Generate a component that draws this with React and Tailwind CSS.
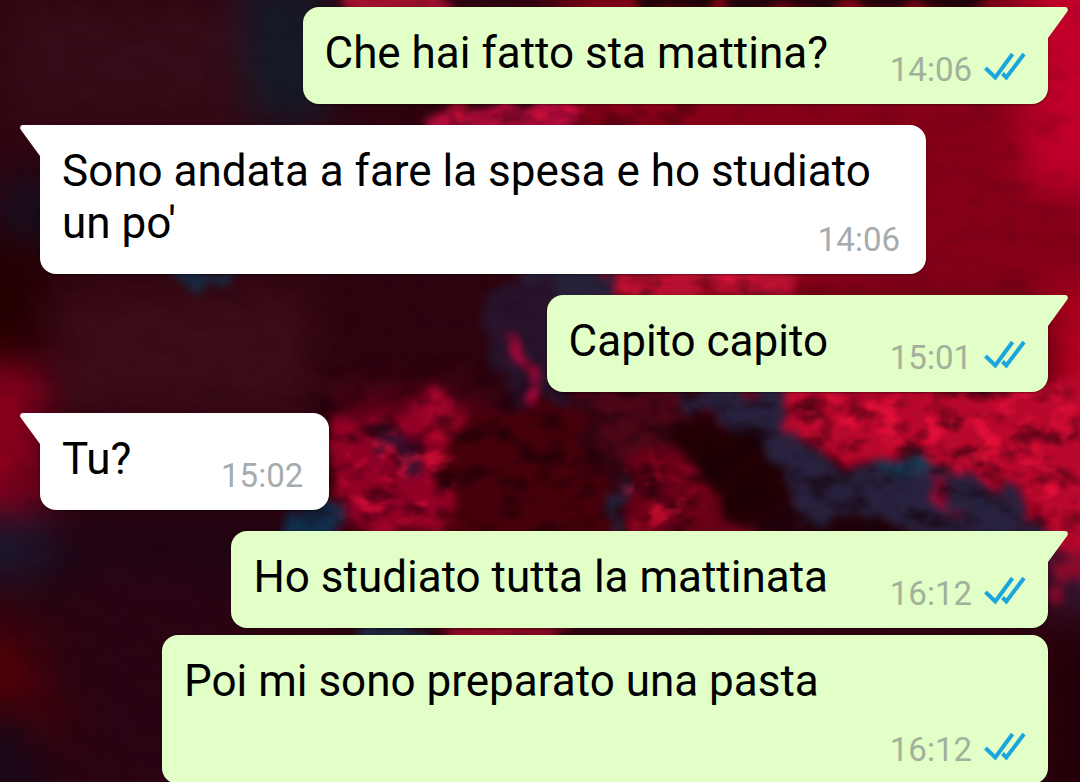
import React from "react";

const messages = [
  { id: 1, mine: true, tail: true, text: "Che hai fatto sta mattina?", time: "14:06" },
  { id: 2, mine: false, tail: true, text: "Sono andata a fare la spesa e ho studiato un po'", time: "14:06" },
  { id: 3, mine: true, tail: true, text: "Capito capito", time: "15:01" },
  { id: 4, mine: false, tail: true, text: "Tu?", time: "15:02" },
  { id: 5, mine: true, tail: true, text: "Ho studiato tutta la mattinata", time: "16:12" },
  { id: 6, mine: true, tail: false, text: "Poi mi sono preparato una pasta", time: "16:12", wide: true },
];

function ReadTicks() {
  return (
    <svg className="mb-1 h-[30px] w-[42px]" viewBox="0 0 42 30" fill="none" stroke="#1ba5dd" strokeWidth="4" role="img" aria-label="Letto">
      <path d="M1.5 15 L11.3 24.5 L28.5 1" />
      <path d="M18.5 20.5 L22.3 24.5 L40 1" />
    </svg>
  );
}

function Tail({ mine }) {
  return (
    <svg
      className={mine ? "absolute top-0 -right-[20px] h-8 w-[21px]" : "absolute top-0 -left-[20px] h-8 w-[21px] -scale-x-100"}
      viewBox="0 0 21 32"
      aria-hidden="true"
    >
      <path d="M0 0 H18 C21 0 21.5 3 20 5 L1 31 V32 H0 Z" fill={mine ? "#e1ffc7" : "#ffffff"} />
    </svg>
  );
}

function Message({ mine, tail, text, time, wide }) {
  const side = mine ? "self-end bg-[#e1ffc7]" : "self-start bg-white";
  const corner = !tail ? "mt-[7px]" : mine ? "rounded-tr-none mt-[21px]" : "rounded-tl-none mt-[21px]";
  return (
    <li className={`relative max-w-[886px] rounded-2xl px-[22px] pt-5 pb-[25px] shadow-[0_1px_2px_rgba(0,0,0,0.4)] first:mt-0 ${side} ${corner} ${wide ? "w-full" : ""}`}>
      {tail && <Tail mine={mine} />}
      <p className="text-[44px] leading-[52px] text-black">
        {text}
        {wide && <br />}
        <span className={mine ? "inline-block h-px w-[198px]" : "inline-block h-px w-[176px]"} />
      </p>
      <div className={`absolute bottom-[14px] flex items-center gap-3 text-[33px] leading-[40px] ${mine ? "right-[22px] text-[#a3b09b]" : "right-[26px] text-[#a6acae]"}`}>
        <time>{time}</time>
        {mine && <ReadTicks />}
      </div>
    </li>
  );
}

function Wallpaper() {
  return (
    <svg className="absolute inset-0 h-full w-full" viewBox="0 0 1080 782" preserveAspectRatio="xMidYMid slice" aria-hidden="true">
      <defs>
        <filter id="haze" x="-20%" y="-20%" width="140%" height="140%" colorInterpolationFilters="sRGB">
          <feGaussianBlur stdDeviation="20" />
        </filter>
        <filter id="rock" x="-10%" y="-10%" width="120%" height="120%" colorInterpolationFilters="sRGB">
          <feTurbulence type="fractalNoise" baseFrequency="0.03" numOctaves="4" seed="8" result="n" />
          <feDisplacementMap in="SourceGraphic" in2="n" scale="50" xChannelSelector="R" yChannelSelector="G" />
          <feGaussianBlur stdDeviation="4" />
        </filter>
        <filter id="grain" x="-5%" y="-5%" width="110%" height="110%" colorInterpolationFilters="sRGB">
          <feGaussianBlur in="SourceGraphic" stdDeviation="14" result="m" />
          <feTurbulence type="fractalNoise" baseFrequency="0.03 0.045" numOctaves="5" seed="21" />
          <feColorMatrix values="0 0 0 0 0.08  0 0 0 0 0  0 0 0 0 0.03  3 0 0 0 -1.4" />
          <feComposite in2="m" operator="in" />
          <feGaussianBlur stdDeviation="1" />
        </filter>
        <filter id="glint" x="-5%" y="-5%" width="110%" height="110%" colorInterpolationFilters="sRGB">
          <feGaussianBlur in="SourceGraphic" stdDeviation="12" result="m" />
          <feTurbulence type="fractalNoise" baseFrequency="0.04 0.06" numOctaves="5" seed="4" />
          <feColorMatrix values="0 0 0 0 1  0 0 0 0 0.08  0 0 0 0 0.25  0 4 0 0 -2" />
          <feComposite in2="m" operator="in" />
          <feGaussianBlur stdDeviation="1" />
        </filter>
      </defs>
      <rect width="1080" height="782" fill="#2e040f" />
      <g filter="url(#haze)">
        <path d="M0 0H300V125H0Z" fill="#370b17" />
        <path d="M0 180H60V240H0Z" fill="#141022" />
        <path d="M-20 240H40V360H-20Z" fill="#260000" />
        <path d="M235 -20H330V125H250Z" fill="#161a28" />
        <path d="M560 -20H1120V310H580Z" fill="#860018" />
        <path d="M1025 -60H1140V190H1025Z" fill="#c3002a" />
        <path d="M60 290H310V410H60Z" fill="#3d0d19" />
        <path d="M-40 365H45V510H-40Z" fill="#8a001e" />
        <path d="M340 400H480V540H340Z" fill="#78001c" />
        <path d="M690 395H1120V480L1060 560L900 480Z" fill="#a50026" />
        <path d="M1045 290H1120V560H1045Z" fill="#b8001e" />
        <path d="M0 515H330V600H40V560Z" fill="#210615" />
        <path d="M-40 520H45V575H-40Z" fill="#191a31" />
        <path d="M80 570H235V800H80Z" fill="#2b0414" />
        <path d="M-40 640L20 630L60 740H40L-40 690Z" fill="#520006" />
        <path d="M-40 710H30L60 820H-40Z" fill="#1b0818" />
        <path d="M1050 540H1120V610H1050Z" fill="#35193a" />
        <path d="M1050 630H1120V820H1050Z" fill="#250008" />
      </g>
      <g filter="url(#rock)">
        <path d="M350 -10H450V10H350Z" fill="#a0112f" />
        <path d="M640 -20H990V8H640Z" fill="#210309" />
        <path d="M425 112Q490 95 570 108V150H430Z" fill="#b00b3a" />
        <path d="M515 262H605L620 302H550Z" fill="#262039" />
        <path d="M610 262H790V300H620Z" fill="#b5102f" />
        <path d="M475 300L550 270L575 410L500 390Z" fill="#27132b" />
        <path d="M508 330L524 335L545 410L528 400Z" fill="#b5063c" />
        <path d="M420 385L455 395L470 425L425 420Z" fill="#a0052a" />
        <path d="M330 420L430 405L450 530H340Z" fill="#920026" />
        <path d="M440 430L560 400L630 540H455Z" fill="#46000b" />
        <path d="M370 430L400 425L415 470L380 460Z" fill="#41102f" />
        <path d="M570 390H700V450L620 460Z" fill="#4c0717" />
        <path d="M622 450L700 440L760 540H630Z" fill="#680017" />
        <path d="M670 430L775 425L790 525H730Z" fill="#220004" />
        <path d="M725 388L1090 380V565L1000 480L870 455L810 450Z" fill="#b8082c" />
        <path d="M660 390L765 388L795 438L850 470L880 458L960 470L1015 500L1060 550H800L785 470L735 430Z" fill="#28213d" />
        <path d="M865 462L925 461L945 474L890 478Z" fill="#173a55" />
        <path d="M925 485L950 490L955 508L930 505Z" fill="#a00a38" />
        <path d="M800 515Q890 500 930 545H790Z" fill="#22030b" />
        <path d="M285 505H335V545H300Z" fill="#102e4c" />
        <path d="M175 268H235V285H180Z" fill="#172b44" />
        <path d="M612 460L626 485L624 530L610 535Z" fill="#242139" />
        <path d="M1055 555L1100 550V610L1060 590Z" fill="#8a0b2c" />
        <path d="M360 625H430V640H360Z" fill="#1c263e" />
        <path d="M440 622H560V642H440Z" fill="#8c0825" />
      </g>
      <rect width="1080" height="782" filter="url(#grain)" opacity="0.13" />
      <path d="M310 380H1080V545H310ZM600 270H800V297H600ZM400 100H700V125H400Z" filter="url(#grain)" opacity="0.55" />
      <path d="M780 390H1080V530L1000 480L880 445L820 440ZM620 270H790V297H620ZM430 104H590V125H430ZM345 430H450V520H345ZM630 465H690V530H630Z" filter="url(#glint)" opacity="0.6" />
    </svg>
  );
}

export default function App() {
  return (
    <main className="relative h-screen overflow-hidden bg-[#2e040f] font-['Roboto',sans-serif]">
      <Wallpaper />
      <ul className="relative flex flex-col pt-[7px] pr-8 pl-10">
        {messages.map((m) => (
          <Message key={m.id} {...m} />
        ))}
      </ul>
    </main>
  );
}
